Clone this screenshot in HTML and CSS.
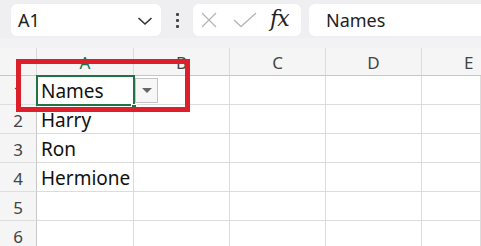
FILE: index.html
```html
<!DOCTYPE html>
<html>
<head>
<meta charset="utf-8">
<link rel="stylesheet" href="styles.css">
</head>
<body>
<div class="toolbar">
  <div class="namebox">
    <span class="ref">A1</span>
    <svg class="chev" width="16" height="10" viewBox="0 0 16 10"><path d="M1.5 2 L8 8 L14.5 2" fill="none" stroke="#333" stroke-width="1.6"/></svg>
  </div>
  <div class="dots"><span></span><span></span><span></span></div>
  <div class="fbtns">
    <svg width="16" height="16" viewBox="0 0 16 16"><path d="M1 1 L15 15 M15 1 L1 15" stroke="#b5b5b5" stroke-width="1.3" fill="none"/></svg>
    <svg width="24" height="16" viewBox="0 0 24 16"><path d="M1 8 L8 14.5 L23 1" stroke="#b5b5b5" stroke-width="1.3" fill="none"/></svg>
    <span class="fx">fx</span>
  </div>
  <div class="finput">Names</div>
</div>
<div class="band"></div>
<div class="sheet">
  <div class="grid">
    <div class="corner"></div>
    <div class="ch sel">A</div>
    <div class="ch">B</div>
    <div class="ch">C</div>
    <div class="ch">D</div>
    <div class="ch edge">E</div>

    <div class="rh">1</div>
    <div class="cell active">Names</div>
    <div class="cell"></div><div class="cell"></div><div class="cell"></div><div class="cell"></div>

    <div class="rh">2</div>
    <div class="cell">Harry</div>
    <div class="cell"></div><div class="cell"></div><div class="cell"></div><div class="cell"></div>

    <div class="rh">3</div>
    <div class="cell">Ron</div>
    <div class="cell"></div><div class="cell"></div><div class="cell"></div><div class="cell"></div>

    <div class="rh">4</div>
    <div class="cell">Hermione</div>
    <div class="cell"></div><div class="cell"></div><div class="cell"></div><div class="cell"></div>

    <div class="rh">5</div>
    <div class="cell"></div>
    <div class="cell"></div><div class="cell"></div><div class="cell"></div><div class="cell"></div>

    <div class="rh">6</div>
    <div class="cell"></div>
    <div class="cell"></div><div class="cell"></div><div class="cell"></div><div class="cell"></div>
  </div>
  <div class="filter"><svg width="10" height="6" viewBox="0 0 10 6"><path d="M0 0 L10 0 L5 5 Z" fill="#666"/></svg></div>
  <div class="handle"></div>
  <div class="highlight"></div>
</div>
</body>
</html>
```
FILE: styles.css
```css
html, body {
  margin: 0;
  padding: 0;
  background: #ffffff;
  overflow: hidden;
  width: 481px;
  height: 246px;
}
body {
  font-family: "Noto Sans", sans-serif;
  color: #222;
}
.toolbar {
  display: flex;
  align-items: center;
  background: #efeef1;
  padding: 4px 0 2px 11px;
  height: 32px;
}
.namebox {
  width: 150px;
  height: 32px;
  box-sizing: border-box;
  background: #fff;
  border-radius: 6px;
  display: flex;
  align-items: center;
  justify-content: space-between;
  padding: 0 8px 0 7px;
  font-size: 18px;
}
.ref { color: #222; }
.chev { margin-top: 1px; }
.dots {
  width: 32px;
  display: flex;
  flex-direction: column;
  align-items: center;
  gap: 3px;
}
.dots span {
  width: 3px;
  height: 3px;
  background: #444;
  border-radius: 1px;
}
.fbtns {
  width: 108px;
  height: 32px;
  box-sizing: border-box;
  background: #fff;
  border-radius: 6px;
  display: flex;
  align-items: center;
  padding: 0 0 0 8px;
  gap: 16px;
}
.fx {
  font-family: "DejaVu Serif", serif;
  font-style: italic;
  font-size: 22px;
  color: #222;
  margin-left: -3px;
  margin-top: -4px;
  letter-spacing: -1px;
}
.finput {
  margin-left: 8px;
  flex: 1;
  min-width: 0;
  height: 32px;
  background: #fff;
  border-radius: 6px 0 0 6px;
  display: flex;
  align-items: center;
  padding-left: 17px;
  font-size: 18px;
}
.band {
  height: 10px;
  background: #f2f1f3;
}
.sheet {
  position: relative;
  overflow: hidden;
}
.grid {
  display: grid;
  grid-template-columns: 37px 97px 96px 96px 96px 59px;
  grid-template-rows: 28px repeat(6, 29px);
}
.corner {
  background: #f5f5f5;
  border-right: 1px solid #d9d9d9;
  border-bottom: 1px solid #c8c8c8;
  box-sizing: border-box;
}
.ch {
  background: #f5f5f5;
  border-right: 1px solid #dcdcdc;
  border-bottom: 1px solid #c6c6c6;
  box-sizing: border-box;
  font-size: 17px;
  color: #444;
  display: flex;
  align-items: center;
  justify-content: center;
  padding-top: 1px;
}
.ch.edge {
  justify-content: flex-start;
  padding-left: 42px;
  border-right: 0;
}
.ch.sel {
  color: #217346;
}
.rh {
  background: #f5f5f5;
  border-right: 1px solid #c8c8c8;
  border-bottom: 1px solid #dedede;
  box-sizing: border-box;
  font-size: 17px;
  color: #444;
  display: flex;
  align-items: center;
  justify-content: center;
  padding-top: 3px;
}
.cell {
  border-right: 1px solid #dcdcdc;
  border-bottom: 1px solid #dcdcdc;
  box-sizing: border-box;
  font-size: 19px;
  color: #111;
  display: flex;
  align-items: center;
  padding-left: 4px;
  padding-top: 3px;
  line-height: 1;
}
.cell.active {
  outline: 2px solid #217346;
  outline-offset: -1px;
  position: relative;
  z-index: 1;
}
.filter {
  position: absolute;
  left: 135px;
  top: 30px;
  width: 23px;
  height: 25px;
  box-sizing: border-box;
  background: #f7f7f7;
  border: 1px solid #c4c4c4;
  display: flex;
  align-items: center;
  justify-content: center;
  z-index: 2;
}
.handle {
  position: absolute;
  left: 131px;
  top: 56px;
  width: 6px;
  height: 6px;
  background: #217346;
  border: 1px solid #fff;
  box-sizing: border-box;
  z-index: 3;
}
.highlight {
  position: absolute;
  left: 16px;
  top: 11px;
  width: 174px;
  height: 53px;
  box-sizing: border-box;
  border: 5px solid #dc1f2b;
  z-index: 4;
}
```
